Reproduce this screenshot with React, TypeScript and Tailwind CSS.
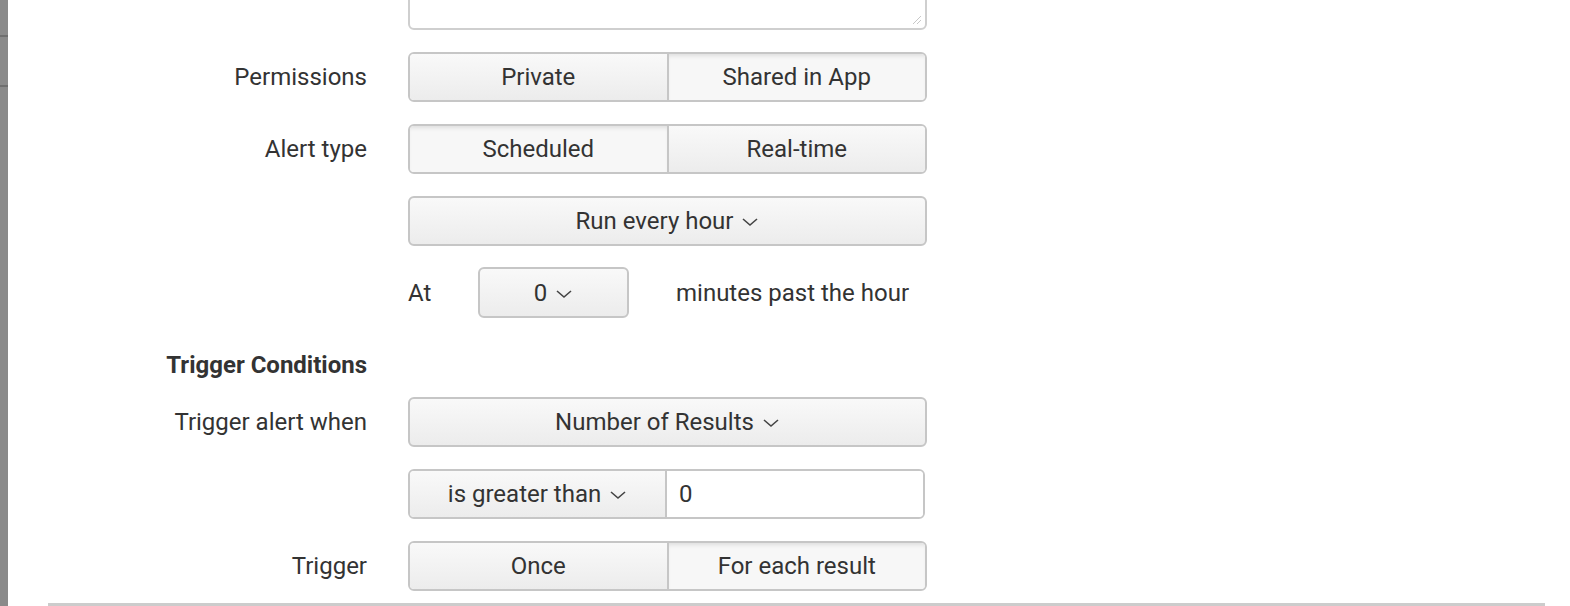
import React from 'react';

const IDLE = 'bg-linear-to-b from-[#f9f9f9] to-[#ececec]';
const ACTIVE = 'bg-[#f7f7f7] shadow-[inset_0_4px_4px_-2px_rgba(0,0,0,0.10)]';

function Chevron() {
  return (
    <svg width="18" height="10" viewBox="0 0 18 10" className="ml-[8px] mt-[2px]" fill="none">
      <polyline points="2,2 9,8 16,2" stroke="#444" strokeWidth="1.6" />
    </svg>
  );
}

function Row({
  label,
  bold,
  className = '',
  children,
}: {
  label?: string;
  bold?: boolean;
  className?: string;
  children?: React.ReactNode;
}) {
  return (
    <div className={`flex items-center ${className}`}>
      <div className={`w-[359px] text-right ${bold ? 'font-bold' : ''}`}>{label}</div>
      <div className="ml-[41px] w-[519px]">{children}</div>
    </div>
  );
}

function Toggle({ options, active }: { options: string[]; active: number }) {
  return (
    <div className="flex h-[50px] rounded-[6px] border-2 border-[#c6c6c6] overflow-hidden">
      {options.map((o, i) => (
        <div
          key={o}
          className={`flex-1 flex items-center justify-center ${i > 0 ? 'border-l-2 border-[#c6c6c6]' : ''} ${
            i === active ? ACTIVE : IDLE
          }`}
        >
          {o}
        </div>
      ))}
    </div>
  );
}

function Dropdown({ text, className = '' }: { text: string; className?: string }) {
  return (
    <div
      className={`flex items-center justify-center rounded-[6px] border-2 border-[#c6c6c6] ${IDLE} ${className}`}
    >
      {text}
      <Chevron />
    </div>
  );
}

export default function App() {
  return (
    <div className="flex h-[606px] w-[1570px] overflow-hidden bg-white text-[24px] text-[#333] font-['Roboto',sans-serif]">
      {/* left edge of neighbouring panel */}
      <div className="flex w-2 shrink-0 flex-col bg-[#8a8a8a]">
        <div className="h-[35px]" />
        <div className="h-[2px] bg-[#6f6f6f]" />
        <div className="h-[48px]" />
        <div className="h-[2px] bg-[#6f6f6f]" />
      </div>

      <div className="flex flex-1 flex-col">
        {/* description textarea (scrolled) */}
        <Row className="-mt-[52px]">
          <div className="relative h-[82px] rounded-[6px] border-2 border-[#cfcfcf] bg-white">
            <svg width="10" height="10" viewBox="0 0 10 10" className="absolute bottom-[3px] right-[3px]">
              <line x1="1" y1="9" x2="9" y2="1" stroke="#c8c8c8" strokeWidth="1" />
              <line x1="5" y1="9" x2="9" y2="5" stroke="#c8c8c8" strokeWidth="1" />
            </svg>
          </div>
        </Row>

        <Row label="Permissions" className="mt-[22px]">
          <Toggle options={['Private', 'Shared in App']} active={1} />
        </Row>

        <Row label="Alert type" className="mt-[22px]">
          <Toggle options={['Scheduled', 'Real-time']} active={0} />
        </Row>

        <Row className="mt-[22px]">
          <Dropdown text="Run every hour" className="h-[50px]" />
        </Row>

        <Row className="mt-[21px]">
          <div className="flex items-center">
            <span className="w-[70px]">At</span>
            <Dropdown text="0" className="h-[51px] w-[151px]" />
            <span className="ml-[47px]">minutes past the hour</span>
          </div>
        </Row>

        <Row label="Trigger Conditions" bold className="mt-[33px] h-[28px]" />

        <Row label="Trigger alert when" className="mt-[18px]">
          <Dropdown text="Number of Results" className="h-[50px]" />
        </Row>

        <Row className="mt-[22px]">
          <div className="flex h-[50px] w-[517px] rounded-[6px] border-2 border-[#c6c6c6] overflow-hidden">
            <div className={`flex w-[257px] items-center justify-center border-r-2 border-[#c6c6c6] ${IDLE}`}>
              is greater than
              <Chevron />
            </div>
            <div className="flex flex-1 items-center bg-white pl-[12px]">0</div>
          </div>
        </Row>

        <Row label="Trigger" className="mt-[22px]">
          <Toggle options={['Once', 'For each result']} active={1} />
        </Row>

        <div className="ml-[40px] mr-[25px] mt-[12px] h-4 border-t-[3px] border-[#cccccc]" />
      </div>
    </div>
  );
}
